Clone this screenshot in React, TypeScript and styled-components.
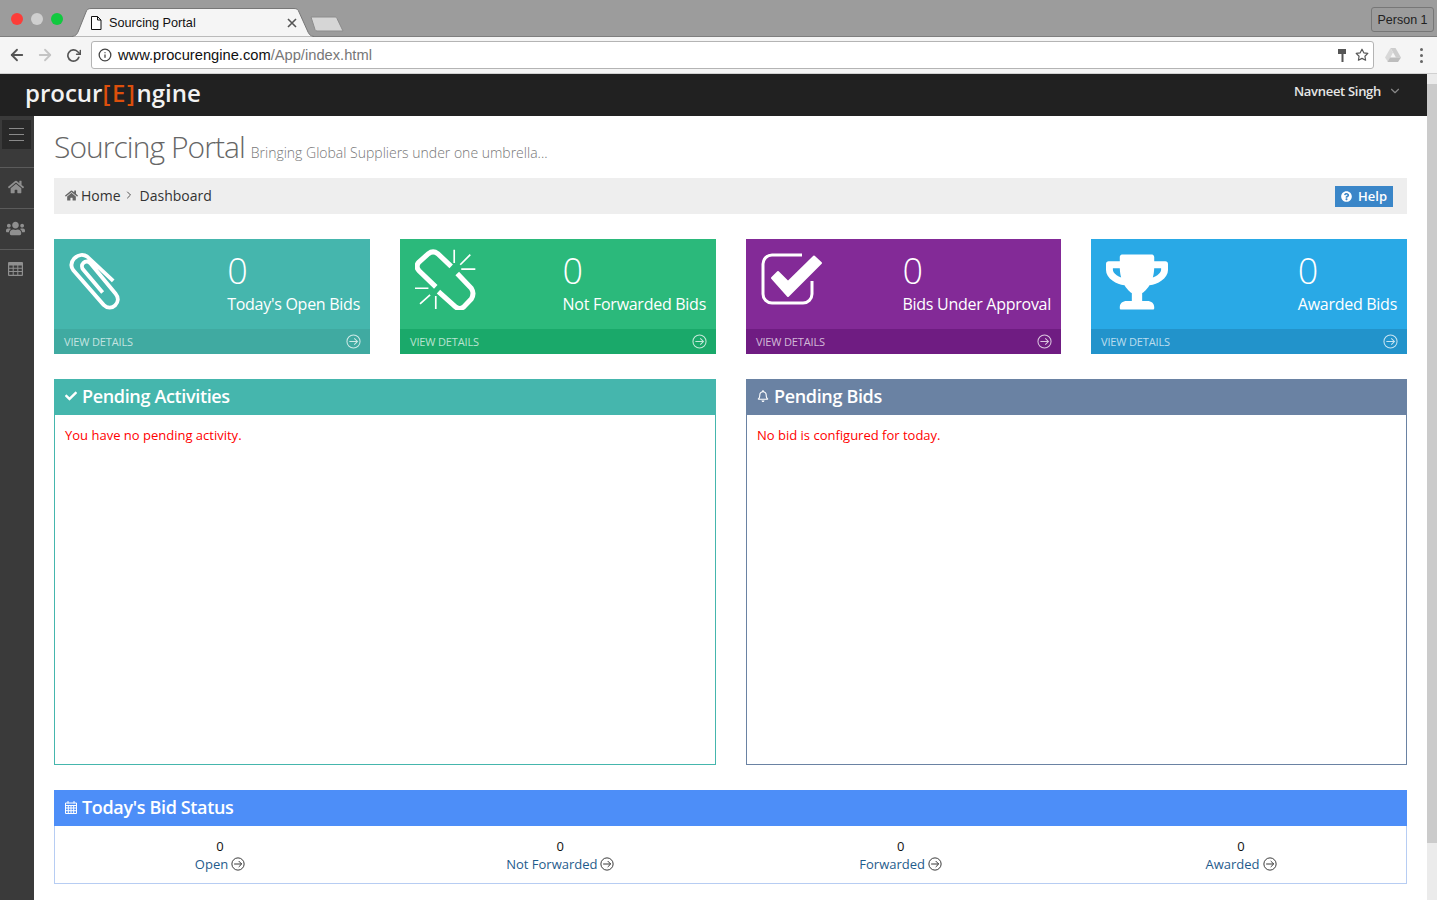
import React from "react";
import styled, { createGlobalStyle } from "styled-components";
import {
  FaHome,
  FaUsers,
  FaCheck,
  FaRegBell,
  FaQuestionCircle,
  FaTrophy,
} from "react-icons/fa";
import { FiArrowLeft, FiArrowRight, FiRotateCw, FiInfo, FiStar, FiChevronDown, FiChevronRight } from "react-icons/fi";

const GlobalStyle = createGlobalStyle`
  html, body {
    margin: 0;
    padding: 0;
    height: 900px;
    overflow: hidden;
    background: #fff;
    font-family: "Open Sans", sans-serif;
  }
  * { box-sizing: border-box; }
`;

const Page = styled.div`
  width: 1437px;
  height: 900px;
  display: flex;
  flex-direction: column;
  overflow: hidden;
`;

/* browser chrome */
const TabStrip = styled.div`
  height: 37px;
  background: #9c9c9c;
  border-bottom: 1px solid #7e7e7e;
  display: flex;
  align-items: flex-end;
  flex-shrink: 0;
`;
const Lights = styled.div`
  display: flex;
  gap: 8px;
  width: 72px;
  padding: 0 0 11px 11px;
`;
const Light = styled.span<{ $c: string }>`
  width: 12px;
  height: 12px;
  border-radius: 50%;
  background: ${(p) => p.$c};
`;
const Tab = styled.div`
  position: relative;
  width: 242px;
  height: 29px;
  margin-bottom: -1px;
  display: flex;
  align-items: center;
  padding: 0 16px 0 18px;
  font: 12.7px "Liberation Sans", sans-serif;
  color: #111;
`;
const TabShape = styled.svg`
  position: absolute;
  left: 0;
  top: 0;
`;
const TabIcon = styled.svg`
  position: relative;
`;
const TabClose = styled.svg`
  position: relative;
  margin-right: 1px;
`;
const TabTitle = styled.span`
  position: relative;
  flex: 1;
  margin-left: 7px;
`;
const NewTab = styled.svg`
  margin: 0 0 4px -4px;
`;
const PersonButton = styled.div`
  margin: 0 3px 4px auto;
  width: 63px;
  height: 25px;
  border: 1px solid #777;
  border-radius: 3px;
  font: 12.5px/25px "Liberation Sans", sans-serif;
  text-align: center;
  color: #222;
`;
const Toolbar = styled.div`
  height: 37px;
  background: #f5f5f5;
  border-bottom: 1px solid #d0d0d0;
  display: flex;
  align-items: center;
  padding-left: 3px;
  flex-shrink: 0;
`;
const NavBtn = styled.span<{ $c: string }>`
  width: 28px;
  display: flex;
  justify-content: center;
  color: ${(p) => p.$c};
  font-size: 18px;
`;
const Omnibox = styled.div`
  margin-left: 4px;
  width: 1283px;
  height: 28px;
  background: #fff;
  border: 1px solid #b4b4b4;
  border-radius: 3px;
  display: flex;
  align-items: center;
  padding: 0 4px 0 6px;
  font: 14.7px "Liberation Sans", sans-serif;
  color: #111;
`;
const UrlPath = styled.span`
  color: #777;
`;
const OmniRight = styled.span`
  margin-left: auto;
  display: flex;
  align-items: center;
  gap: 9px;
  color: #555;
`;
const UrlText = styled.span`
  margin-left: 6px;
`;
const DriveIcon = styled.svg`
  margin-left: 11px;
`;
const Kebab = styled.div`
  margin-left: 19px;
  display: flex;
  flex-direction: column;
  gap: 3px;
  span {
    width: 3px;
    height: 3px;
    border-radius: 50%;
    background: #666;
  }
`;

/* app */
const AppArea = styled.div`
  flex: 1;
  display: flex;
  min-height: 0;
`;
const AppMain = styled.div`
  width: 1427px;
  display: flex;
  flex-direction: column;
`;
const ScrollTrack = styled.div`
  flex: 1;
  background: #ebebeb;
  padding-top: 10px;
`;
const ScrollThumb = styled.div`
  height: 759px;
  background: #cbcbcb;
`;
const TopBar = styled.header`
  height: 42px;
  background: #212121;
  display: flex;
  align-items: center;
  padding: 0 25px;
`;
const Logo = styled.div`
  font: 600 24px "Open Sans", sans-serif;
  color: #f2f2f2;
  margin-top: -6px;
  b {
    font-weight: 600;
    color: #dd4f0c;
    letter-spacing: 1.6px;
  }
`;
const UserMenu = styled.div`
  margin-left: auto;
  display: flex;
  align-items: center;
  gap: 7px;
  font: 600 13px "Open Sans", sans-serif;
  letter-spacing: -0.3px;
  color: #e6e6e6;
  margin-top: -8px;
  svg {
    color: #888;
  }
`;
const Body = styled.div`
  flex: 1;
  display: flex;
  min-height: 0;
`;
const Sidebar = styled.nav`
  width: 34px;
  background: #3a3a3a;
  flex-shrink: 0;
  padding-top: 4px;
`;
const MenuToggle = styled.div`
  margin: 0 3px 18px 2px;
  height: 29px;
  background: #292929;
  display: flex;
  align-items: center;
  justify-content: center;
`;
const SideItem = styled.div`
  height: 41px;
  border-top: 1px solid #5b5b5b;
  display: flex;
  align-items: center;
  justify-content: center;
  padding: 0 3px 2px 0;
  color: #8f8f8f;
  font-size: 16px;
`;
const Content = styled.main`
  flex: 1;
  min-width: 0;
  padding: 0 20px;
  background: #fff;
`;
const TitleRow = styled.div`
  height: 62px;
  padding-top: 11px;
  color: #666;
  white-space: nowrap;
`;
const Title = styled.span`
  font: 300 30px/40px "Open Sans", sans-serif;
  letter-spacing: -0.95px;
`;
const Subtitle = styled.span`
  font: 300 14px "Open Sans", sans-serif;
  color: #777;
  margin-left: 6px;
`;
const Crumbs = styled.div`
  height: 36px;
  background: #eee;
  display: flex;
  align-items: center;
  padding: 0 14px 2px 11px;
  font: 14px "Open Sans", sans-serif;
  color: #333;
`;
const CrumbHome = styled.span`
  display: flex;
  align-items: center;
  gap: 3px;
  svg {
    color: #666;
    font-size: 13px;
  }
`;
const CrumbSep = styled.span`
  display: flex;
  color: #555;
  font-size: 12px;
  margin: 0 5px 0 2px;
`;
const HelpButton = styled.span`
  margin: 2px 0 0 auto;
  width: 58px;
  height: 21px;
  background: #3a86c8;
  color: #fff;
  font: 600 13px "Open Sans", sans-serif;
  display: flex;
  align-items: center;
  justify-content: center;
  gap: 6px;
`;
const StatGrid = styled.div`
  margin-top: 25px;
  display: grid;
  grid-template-columns: 316px 316px 315px 316px;
  gap: 30px;
`;
const StatCard = styled.div<{ $bg: string }>`
  height: 115px;
  background: ${(p) => p.$bg};
  color: #fff;
  display: flex;
  flex-direction: column;
`;
const StatTop = styled.div`
  height: 90px;
  display: flex;
  justify-content: space-between;
  padding: 11px 10px 0 15px;
`;
const StatIcon = styled.div<{ $top: number }>`
  margin-top: ${(p) => p.$top}px;
  line-height: 0;
`;
const StatText = styled.div`
  text-align: left;
`;
const StatValue = styled.div`
  font: 300 36px/42px "Open Sans", sans-serif;
`;
const StatLabel = styled.div`
  font: 400 16px/24px "Open Sans", sans-serif;
  letter-spacing: -0.27px;
`;
const StatFooter = styled.div<{ $bg: string }>`
  height: 25px;
  background: ${(p) => p.$bg};
  display: flex;
  align-items: center;
  justify-content: space-between;
  padding: 0 9px 0 10px;
  font: 400 11px "Open Sans", sans-serif;
  letter-spacing: -0.15px;
  color: rgba(255, 255, 255, 0.7);
`;
const PanelRow = styled.div`
  margin-top: 25px;
  display: grid;
  grid-template-columns: 662px 661px;
  gap: 30px;
`;
const WideRow = styled.div`
  margin-top: 25px;
`;
const Panel = styled.section<{ $edge: string; $h: number }>`
  height: ${(p) => p.$h}px;
  border: 1px solid ${(p) => p.$edge};
  display: flex;
  flex-direction: column;
`;
const PanelHead = styled.div<{ $bg: string }>`
  height: 36px;
  margin: -1px -1px 0;
  background: ${(p) => p.$bg};
  color: #fff;
  display: flex;
  align-items: center;
  gap: 5px;
  padding: 0 0 2px 11px;
  font: 600 18px "Open Sans", sans-serif;
  letter-spacing: -0.35px;
  flex-shrink: 0;
  svg {
    font-size: 12px;
  }
`;
const Notice = styled.p`
  margin: 11px 10px 0;
  color: #f00;
  font: 13px/18px "Open Sans", sans-serif;
`;
const StatusRow = styled.div`
  display: grid;
  grid-template-columns: repeat(4, 330px);
  justify-content: space-between;
  padding-top: 11px;
  text-align: center;
`;
const StatusCell = styled.div`
  font: 13px/18px "Open Sans", sans-serif;
  color: #111;
`;
const StatusLink = styled.div`
  display: flex;
  justify-content: center;
  align-items: center;
  gap: 3px;
  color: #1f5c8c;
`;

function ArrowCircle({ size, color }: { size: number; color: string }) {
  return (
    <svg width={size} height={size} viewBox="0 0 16 16" fill="none" stroke={color} strokeWidth="1.1">
      <circle cx="8" cy="8" r="7" />
      <path d="M3.6 8h8.6M8.8 4.6 12.2 8l-3.4 3.4" />
    </svg>
  );
}

function PaperclipIcon() {
  return (
    <svg width="52" height="58" viewBox="0 0 52 58" fill="none" stroke="#fff" strokeWidth="4">
      <path d="M45 28 18 2.8C14 0 8.500.6 4.500 4.500 1 8.500.5 13 3.500 17L35 53c4 4 9 3.500 12 .5 3.500-3.500 3.800-8 .5-12L21 9.500c-2-2.200-5-2.200-7-.3s-2 4.800-.3 7L34 40" transform="translate(1 1) scale(.96)" />
    </svg>
  );
}

function BrokenLinkIcon() {
  return (
    <svg width="62" height="62" viewBox="60 40 185 185" fill="none" stroke="#fff">
      <path d="M168 95 128 57Q114 46 100 57L72 82Q60 95 72 108L122 156" strokeWidth="15" />
      <path d="M130 170 180 215Q192 226 206 215L228 192Q238 176 228 160L186 116" strokeWidth="15" />
      <path d="M177 45V85M195 90 225 60M198 103H240M60 160H100M75 207 105 180M122 183V222" strokeWidth="5" />
    </svg>
  );
}

function CheckSquareIcon() {
  return (
    <svg width="62" height="52" viewBox="0 0 62 52" fill="none">
      <path d="M41 2H11C6 2 2 6 2 11v30c0 5 4 9 9 9h31c5 0 9-4 9-9V28" stroke="#fff" strokeWidth="3" />
      <path d="M11 25l6-6 10 10L53 3.500l7 6.500-33 33z" fill="#fff" stroke="#fff" strokeWidth="2" strokeLinejoin="round" />
    </svg>
  );
}

function GridIcon() {
  return (
    <svg width="15" height="14" viewBox="0 0 15 14" fill="#8f8f8f">
      <path d="M1 0h13a1 1 0 0 1 1 1v12a1 1 0 0 1-1 1H1a1 1 0 0 1-1-1V1a1 1 0 0 1 1-1z" />
      <path d="M1.200 3.500h3.500v2.300H1.200zM5.700 3.500h3.600v2.300H5.700zM10.300 3.500h3.500v2.300h-3.500zM1.200 6.800h3.500v2.200H1.200zM5.700 6.800h3.600v2.200H5.700zM10.300 6.800h3.500v2.200h-3.500zM1.200 10h3.500v2.800H1.200zM5.700 10h3.600v2.800H5.700zM10.300 10h3.500v2.800h-3.500z" fill="#3a3a3a" />
    </svg>
  );
}

function CalendarIcon() {
  return (
    <svg width="12" height="13" viewBox="0 0 12 13" fill="none" stroke="#fff" strokeWidth="1">
      <path d="M.5 2h11v10.500H.5zM.5 4.500h11M3 0v2.500M9 0v2.500M.5 7h11M.5 9.700h11M3.300 4.500v8M6 4.500v8M8.700 4.500v8" />
    </svg>
  );
}

const stats = [
  { label: "Today's Open Bids", bg: "#45b6ad", foot: "#40aaa1", top: 3, icon: <PaperclipIcon /> },
  { label: "Not Forwarded Bids", bg: "#2bb97b", foot: "#1aa96a", top: -2, icon: <BrokenLinkIcon /> },
  { label: "Bids Under Approval", bg: "#832a97", foot: "#6f1c82", top: 3, icon: <CheckSquareIcon /> },
  { label: "Awarded Bids", bg: "#29a9e6", foot: "#2293cb", top: 1, icon: <FaTrophy size={62} /> },
];

const statusItems = ["Open", "Not Forwarded", "Forwarded", "Awarded"];

export default function App() {
  return (
    <Page>
      <GlobalStyle />
      <TabStrip>
        <Lights>
          <Light $c="#fc3d39" />
          <Light $c="#cfcfcf" />
          <Light $c="#10c93f" />
        </Lights>
        <Tab>
          <TabShape width="242" height="29" viewBox="0 0 242 29">
            <path d="M0 28.500C4 28 5 26 6 24L14 4C15 1.500 16 .5 19 .5H222C225 .5 226 1.500 227 4L236 24C237 26 238 28 242 28.500" fill="#f5f5f5" stroke="#777" />
          </TabShape>
          <TabIcon width="12" height="14" viewBox="0 0 12 14" fill="#fff" stroke="#111">
            <path d="M1.500.5h6l3.500 3.500v9.500h-9.500zM7.500.5V4H11" />
          </TabIcon>
          <TabTitle>Sourcing Portal</TabTitle>
          <TabClose width="10" height="10" viewBox="0 0 10 10" stroke="#555" strokeWidth="1.6">
            <path d="M1 1l8 8M9 1l-8 8" />
          </TabClose>
        </Tab>
        <NewTab width="34" height="16" viewBox="0 0 34 16">
          <path d="M1 1h24c1 0 1.500.5 2 1.500L33 15H7c-1 0-1.500-.5-2-1.500z" fill="#d6d6d6" stroke="#8c8c8c" />
        </NewTab>
        <PersonButton>Person 1</PersonButton>
      </TabStrip>
      <Toolbar>
        <NavBtn $c="#555"><FiArrowLeft strokeWidth={2.4} /></NavBtn>
        <NavBtn $c="#c4c4c4"><FiArrowRight strokeWidth={2.4} /></NavBtn>
        <NavBtn $c="#555"><FiRotateCw strokeWidth={2.6} size={15} /></NavBtn>
        <Omnibox>
          <FiInfo size={14} color="#444" strokeWidth={2.2} />
          <UrlText>www.procurengine.com<UrlPath>/App/index.html</UrlPath></UrlText>
          <OmniRight>
            <svg width="8" height="13" viewBox="0 0 8 13" fill="#555">
              <path d="M0 0h8v5H5.500v8h-2V5H0z" />
            </svg>
            <FiStar size={14} strokeWidth={2} />
          </OmniRight>
        </Omnibox>
        <DriveIcon width="16" height="14" viewBox="0 0 16 14">
          <path d="M5.500 0h5L16 9.500h-5z" fill="#cdcdcd" />
          <path d="M5.500 0 8 4.500 3 14 0 9.500z" fill="#d8d8d8" />
          <path d="M5 9.500h11L13 14H2.500z" fill="#bdbdbd" />
        </DriveIcon>
        <Kebab><span /><span /><span /></Kebab>
      </Toolbar>
      <AppArea>
        <AppMain>
          <TopBar>
            <Logo>procur<b>[E]</b>ngine</Logo>
            <UserMenu>Navneet Singh <FiChevronDown size={14} /></UserMenu>
          </TopBar>
          <Body>
            <Sidebar>
              <MenuToggle>
                <svg width="15" height="13" viewBox="0 0 15 13" stroke="#8a8a8a">
                  <path d="M0 .5h15M0 6.500h15M0 12.500h15" />
                </svg>
              </MenuToggle>
              <SideItem><FaHome /></SideItem>
              <SideItem><FaUsers size={19} /></SideItem>
              <SideItem><GridIcon /></SideItem>
            </Sidebar>
            <Content>
              <TitleRow>
                <Title>Sourcing Portal</Title>
                <Subtitle>Bringing Global Suppliers under one umbrella...</Subtitle>
              </TitleRow>
              <Crumbs>
                <CrumbHome><FaHome />Home</CrumbHome>
                <CrumbSep><FiChevronRight /></CrumbSep>
                Dashboard
                <HelpButton><FaQuestionCircle size={11} />Help</HelpButton>
              </Crumbs>
              <StatGrid>
                {stats.map((s) => (
                  <StatCard key={s.label} $bg={s.bg}>
                    <StatTop>
                      <StatIcon $top={s.top}>{s.icon}</StatIcon>
                      <StatText>
                        <StatValue>0</StatValue>
                        <StatLabel>{s.label}</StatLabel>
                      </StatText>
                    </StatTop>
                    <StatFooter $bg={s.foot}>
                      VIEW DETAILS
                      <ArrowCircle size={15} color="rgba(255,255,255,.75)" />
                    </StatFooter>
                  </StatCard>
                ))}
              </StatGrid>
              <PanelRow>
                <Panel $edge="#45b6ad" $h={386}>
                  <PanelHead $bg="#45b6ad"><FaCheck />Pending Activities</PanelHead>
                  <Notice>You have no pending activity.</Notice>
                </Panel>
                <Panel $edge="#6a82a3" $h={386}>
                  <PanelHead $bg="#6a82a3"><FaRegBell />Pending Bids</PanelHead>
                  <Notice>No bid is configured for today.</Notice>
                </Panel>
              </PanelRow>
              <WideRow>
                <Panel $edge="#b7cdf3" $h={94}>
                  <PanelHead $bg="#4d8ef8"><CalendarIcon />Today's Bid Status</PanelHead>
                  <StatusRow>
                    {statusItems.map((t) => (
                      <StatusCell key={t}>
                        0
                        <StatusLink>{t}<ArrowCircle size={14} color="#333" /></StatusLink>
                      </StatusCell>
                    ))}
                  </StatusRow>
                </Panel>
              </WideRow>
            </Content>
          </Body>
        </AppMain>
        <ScrollTrack><ScrollThumb /></ScrollTrack>
      </AppArea>
    </Page>
  );
}
